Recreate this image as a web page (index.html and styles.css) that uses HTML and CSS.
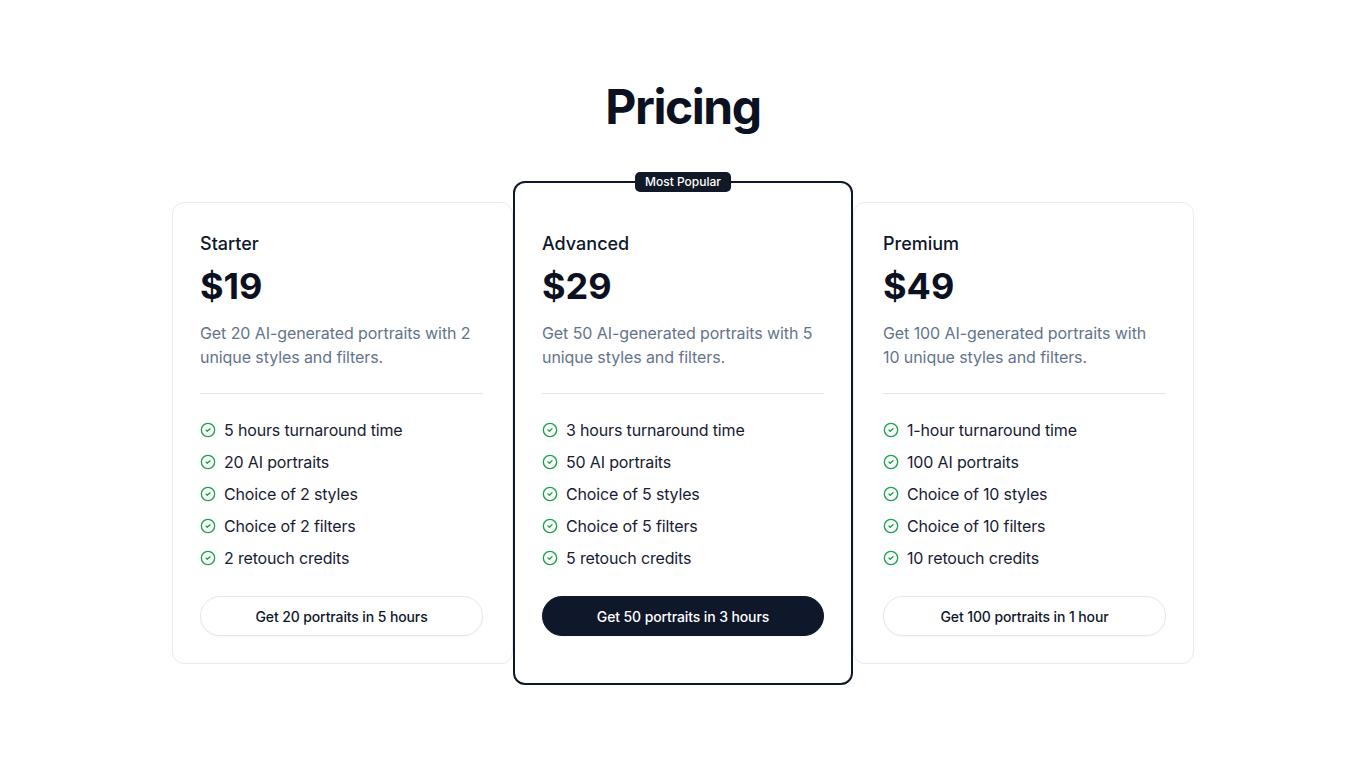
FILE: index.html
```html
<!DOCTYPE html>
<html lang="en">
<head>
<meta charset="utf-8">
<title>Pricing</title>
<link rel="stylesheet" href="styles.css">
</head>
<body>
<main class="pricing">
  <h1 class="title">Pricing</h1>
  <div class="plans">
    <section class="card card-left">
      <h2 class="name">Starter</h2>
      <div class="price">$19</div>
      <p class="desc">Get 20 AI-generated portraits with 2 unique styles and filters.</p>
      <hr class="rule">
      <ul class="features">
        <li><svg class="check" viewBox="0 0 24 24"><circle cx="12" cy="12" r="10"/><path d="m9 12 2 2 4-4"/></svg>5 hours turnaround time</li>
        <li><svg class="check" viewBox="0 0 24 24"><circle cx="12" cy="12" r="10"/><path d="m9 12 2 2 4-4"/></svg>20 AI portraits</li>
        <li><svg class="check" viewBox="0 0 24 24"><circle cx="12" cy="12" r="10"/><path d="m9 12 2 2 4-4"/></svg>Choice of 2 styles</li>
        <li><svg class="check" viewBox="0 0 24 24"><circle cx="12" cy="12" r="10"/><path d="m9 12 2 2 4-4"/></svg>Choice of 2 filters</li>
        <li><svg class="check" viewBox="0 0 24 24"><circle cx="12" cy="12" r="10"/><path d="m9 12 2 2 4-4"/></svg>2 retouch credits</li>
      </ul>
      <button class="btn">Get 20 portraits in 5 hours</button>
    </section>
    <section class="card card-featured">
      <span class="badge">Most Popular</span>
      <h2 class="name">Advanced</h2>
      <div class="price">$29</div>
      <p class="desc">Get 50 AI-generated portraits with 5 unique styles and filters.</p>
      <hr class="rule">
      <ul class="features">
        <li><svg class="check" viewBox="0 0 24 24"><circle cx="12" cy="12" r="10"/><path d="m9 12 2 2 4-4"/></svg>3 hours turnaround time</li>
        <li><svg class="check" viewBox="0 0 24 24"><circle cx="12" cy="12" r="10"/><path d="m9 12 2 2 4-4"/></svg>50 AI portraits</li>
        <li><svg class="check" viewBox="0 0 24 24"><circle cx="12" cy="12" r="10"/><path d="m9 12 2 2 4-4"/></svg>Choice of 5 styles</li>
        <li><svg class="check" viewBox="0 0 24 24"><circle cx="12" cy="12" r="10"/><path d="m9 12 2 2 4-4"/></svg>Choice of 5 filters</li>
        <li><svg class="check" viewBox="0 0 24 24"><circle cx="12" cy="12" r="10"/><path d="m9 12 2 2 4-4"/></svg>5 retouch credits</li>
      </ul>
      <button class="btn btn-primary">Get 50 portraits in 3 hours</button>
    </section>
    <section class="card card-right">
      <h2 class="name">Premium</h2>
      <div class="price">$49</div>
      <p class="desc">Get 100 AI-generated portraits with 10 unique styles and filters.</p>
      <hr class="rule">
      <ul class="features">
        <li><svg class="check" viewBox="0 0 24 24"><circle cx="12" cy="12" r="10"/><path d="m9 12 2 2 4-4"/></svg>1-hour turnaround time</li>
        <li><svg class="check" viewBox="0 0 24 24"><circle cx="12" cy="12" r="10"/><path d="m9 12 2 2 4-4"/></svg>100 AI portraits</li>
        <li><svg class="check" viewBox="0 0 24 24"><circle cx="12" cy="12" r="10"/><path d="m9 12 2 2 4-4"/></svg>Choice of 10 styles</li>
        <li><svg class="check" viewBox="0 0 24 24"><circle cx="12" cy="12" r="10"/><path d="m9 12 2 2 4-4"/></svg>Choice of 10 filters</li>
        <li><svg class="check" viewBox="0 0 24 24"><circle cx="12" cy="12" r="10"/><path d="m9 12 2 2 4-4"/></svg>10 retouch credits</li>
      </ul>
      <button class="btn">Get 100 portraits in 1 hour</button>
    </section>
  </div>
</main>
</body>
</html>
```
FILE: styles.css
```css
* { box-sizing: border-box; }
html, body { margin: 0; padding: 0; background: #ffffff; }
body {
  min-height: 100vh;
  font-family: Inter, "Noto Sans", "Liberation Sans", sans-serif;
  color: #0f172a;
  -webkit-font-smoothing: antialiased;
}
.pricing {
  padding: 83px 0 84px;
  display: flex;
  flex-direction: column;
  align-items: center;
}
.title {
  margin: 0;
  font-size: 48px;
  line-height: 48px;
  font-weight: 700;
  letter-spacing: -0.03em;
  color: #0b1120;
}
.plans {
  margin-top: 71px;
  width: 1022px;
  display: grid;
  grid-template-columns: 341px 340px 341px;
}
.card {
  position: relative;
  border: 1px solid #e9ebef;
  border-radius: 12px;
  padding: 27px 28px;
  background: #fff;
  display: flex;
  flex-direction: column;
}
.card-left { padding: 27px 29px 27px 27px; }
.card-right { padding: 27px 27px 27px 29px; }
.card-featured {
  z-index: 1;
  margin: -21px 0;
  border: 2px solid #0f172a;
  padding: 47px 27px;
}
.badge {
  position: absolute;
  top: -11px;
  left: 50%;
  transform: translateX(-50%);
  background: #111827;
  color: #fff;
  font-size: 12px;
  line-height: 20px;
  font-weight: 500;
  padding: 0 10px;
  border-radius: 5px;
  white-space: nowrap;
}
.name {
  margin: 0;
  font-size: 18px;
  line-height: 28px;
  font-weight: 500;
  color: #0f172a;
}
.price {
  margin-top: 8px;
  font-size: 36px;
  line-height: 40px;
  font-weight: 700;
  color: #0b1120;
}
.desc {
  margin: 15px 0 0;
  font-size: 16px;
  line-height: 24px;
  letter-spacing: -0.005em;
  color: #64748b;
}
.rule {
  margin: 24px 0 0;
  border: 0;
  border-top: 1px solid #e5e7eb;
  height: 0;
}
.features {
  list-style: none;
  margin: 24px 0 0;
  padding: 0;
  display: flex;
  flex-direction: column;
  gap: 8px;
}
.features li {
  display: flex;
  align-items: center;
  gap: 8px;
  font-size: 16px;
  line-height: 24px;
  letter-spacing: -0.01em;
  color: #172033;
}
.check {
  width: 16px;
  height: 16px;
  flex: none;
  fill: none;
  stroke: #16a34a;
  stroke-width: 2;
  stroke-linecap: round;
  stroke-linejoin: round;
}
.btn {
  margin-top: 26px;
  height: 40px;
  border-radius: 999px;
  border: 1px solid #e5e7eb;
  background: #fff;
  font-family: inherit;
  font-size: 14px;
  font-weight: 500;
  letter-spacing: -0.008em;
  color: #0f172a;
  box-shadow: 0 1px 2px rgba(15, 23, 42, 0.04);
}
.btn-primary {
  background: #0f172a;
  border-color: #0f172a;
  color: #fff;
}
```
